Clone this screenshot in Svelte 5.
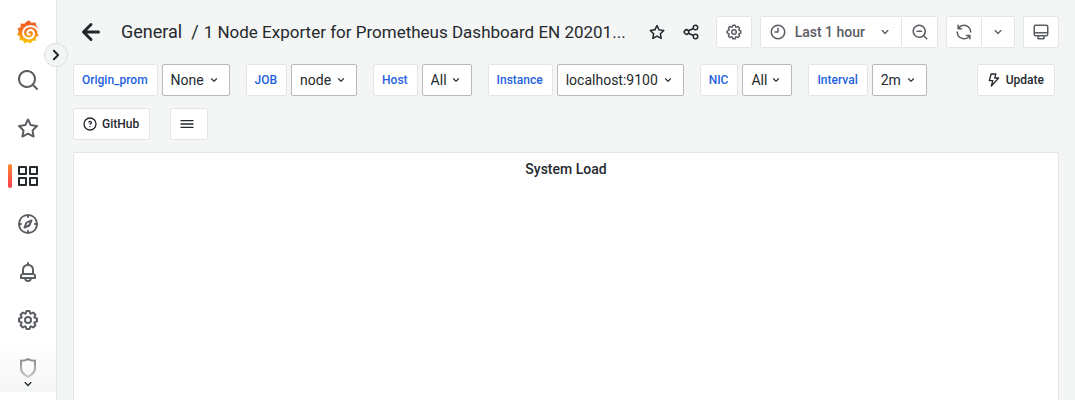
<script>
  const icons = {
    arrowLeft: 'M17,11H9.41l3.3-3.29a1,1,0,1,0-1.42-1.42l-5,5a1,1,0,0,0-.21.33,1,1,0,0,0,0,.76,1,1,0,0,0,.21.33l5,5a1,1,0,0,0,1.42,0,1,1,0,0,0,0-1.42L9.41,13H17a1,1,0,0,0,0-2Z',
    angleDown: 'M17,9.17a1,1,0,0,0-1.41,0L12,12.71,8.46,9.17a1,1,0,0,0-1.41,0,1,1,0,0,0,0,1.42l4.24,4.24a1,1,0,0,0,1.42,0L17,10.59A1,1,0,0,0,17,9.17Z',
    angleRight: 'M14.83,11.29,10.59,7.05a1,1,0,0,0-1.42,0,1,1,0,0,0,0,1.41L12.71,12,9.17,15.54a1,1,0,0,0,0,1.41,1,1,0,0,0,.71.29,1,1,0,0,0,.71-.29l4.24-4.24A1,1,0,0,0,14.83,11.29Z',
    search: 'M21.71,20.29,18,16.61A9,9,0,1,0,16.61,18l3.68,3.68a1,1,0,0,0,1.42,0A1,1,0,0,0,21.71,20.29ZM11,18a7,7,0,1,1,7-7A7,7,0,0,1,11,18Z',
    searchMinus: 'M21.71,20.29,18,16.61A9,9,0,1,0,16.61,18l3.68,3.68a1,1,0,0,0,1.42,0A1,1,0,0,0,21.71,20.29ZM11,18a7,7,0,1,1,7-7A7,7,0,0,1,11,18ZM14,10H8a1,1,0,0,0,0,2h6a1,1,0,0,0,0-2Z',
    star: 'M22,9.67A1,1,0,0,0,21.14,9l-5.69-.83L12.9,3a1,1,0,0,0-1.8,0L8.55,8.16,2.86,9a1,1,0,0,0-.81.68,1,1,0,0,0,.25,1l4.13,4-1,5.68A1,1,0,0,0,6.9,21.44L12,18.77l5.1,2.67a.93.93,0,0,0,.46.12,1,1,0,0,0,.59-.19,1,1,0,0,0,.4-1l-1-5.68,4.13-4A1,1,0,0,0,22,9.67Zm-6.15,4a1,1,0,0,0-.29.88l.72,4.2-3.76-2a1.06,1.06,0,0,0-.94,0l-3.76,2,.72-4.2a1,1,0,0,0-.29-.88l-3-3,4.21-.61a1,1,0,0,0,.76-.55L12,5.7l1.88,3.82a1,1,0,0,0,.76.55l4.21.61Z',
    apps: 'M10,13H3a1,1,0,0,0-1,1v7a1,1,0,0,0,1,1h7a1,1,0,0,0,1-1V14A1,1,0,0,0,10,13ZM9,20H4V15H9ZM21,2H14a1,1,0,0,0-1,1v7a1,1,0,0,0,1,1h7a1,1,0,0,0,1-1V3A1,1,0,0,0,21,2ZM20,9H15V4h5Zm1,4H14a1,1,0,0,0-1,1v7a1,1,0,0,0,1,1h7a1,1,0,0,0,1-1V14A1,1,0,0,0,21,13Zm-1,7H15V15h5ZM10,2H3A1,1,0,0,0,2,3v7a1,1,0,0,0,1,1h7a1,1,0,0,0,1-1V3A1,1,0,0,0,10,2ZM9,9H4V4H9Z',
    compass: 'M12,2A10,10,0,1,0,22,12,10,10,0,0,0,12,2ZM13,19.93V19a1,1,0,0,0-2,0v.93A8,8,0,0,1,4.07,13H5a1,1,0,0,0,0-2H4.07A8,8,0,0,1,11,4.07V5a1,1,0,0,0,2,0V4.07A8,8,0,0,1,19.93,11H19a1,1,0,0,0,0,2h.93A8,8,0,0,1,13,19.93ZM15.14,7.55l-5,2.12a1,1,0,0,0-.52.52l-2.12,5a1,1,0,0,0,.21,1.1,1,1,0,0,0,.7.3.93.93,0,0,0,.4-.09l5-2.12a1,1,0,0,0,.52-.52l2.12-5a1,1,0,0,0-1.31-1.31ZM12.49,12.49,10.28,13.43l.94-2.21,2.21-.94Z',
    bell: 'M18,13.18V10a6,6,0,0,0-5-5.91V3a1,1,0,0,0-2,0V4.09A6,6,0,0,0,6,10v3.18A3,3,0,0,0,4,16v2a1,1,0,0,0,1,1H8.14a4,4,0,0,0,7.72,0H19a1,1,0,0,0,1-1V16A3,3,0,0,0,18,13.18ZM8,10a4,4,0,0,1,8,0v3H8Zm4,10a2,2,0,0,1-1.72-1h3.44A2,2,0,0,1,12,20Zm6-3H6V16a1,1,0,0,1,1-1H17a1,1,0,0,1,1,1Z',
    cog: 'M21.32,9.55l-1.89-.63.89-1.78A1,1,0,0,0,20.13,6L18,3.87a1,1,0,0,0-1.15-.19l-1.78.89-.63-1.89A1,1,0,0,0,13.5,2h-3a1,1,0,0,0-.95.68L8.92,4.57,7.14,3.68A1,1,0,0,0,6,3.87L3.87,6a1,1,0,0,0-.19,1.15l.89,1.78-1.89.63A1,1,0,0,0,2,10.5v3a1,1,0,0,0,.68.95l1.89.63-.89,1.78A1,1,0,0,0,3.87,18L6,20.13a1,1,0,0,0,1.15.19l1.78-.89.63,1.89a1,1,0,0,0,.95.68h3a1,1,0,0,0,.95-.68l.63-1.89,1.78.89A1,1,0,0,0,18,20.13L20.13,18a1,1,0,0,0,.19-1.15l-.89-1.78,1.89-.63A1,1,0,0,0,22,13.5v-3A1,1,0,0,0,21.32,9.55ZM20,12.78l-1.2.4A2,2,0,0,0,17.64,16l.57,1.14-1.1,1.1L16,17.64a2,2,0,0,0-2.79,1.16l-.4,1.2H11.22l-.4-1.2A2,2,0,0,0,8,17.64l-1.14.57-1.1-1.1L6.36,16A2,2,0,0,0,5.2,13.18L4,12.78V11.22l1.2-.4A2,2,0,0,0,6.36,8L5.79,6.89l1.1-1.1L8,6.36A2,2,0,0,0,10.82,5.2l.4-1.2h1.56l.4,1.2A2,2,0,0,0,16,6.36l1.14-.57,1.1,1.1L17.64,8a2,2,0,0,0,1.16,2.79l1.2.4ZM12,8a4,4,0,1,0,4,4A4,4,0,0,0,12,8Zm0,6a2,2,0,1,1,2-2A2,2,0,0,1,12,14Z',
    shield: 'M19.63,3.65a1,1,0,0,0-.84-.2,8,8,0,0,1-6.22-1.27,1,1,0,0,0-1.14,0A8,8,0,0,1,5.21,3.45a1,1,0,0,0-.84.2A1,1,0,0,0,4,4.43v7.45a9,9,0,0,0,3.77,7.33l3.65,2.6a1,1,0,0,0,1.16,0l3.65-2.6A9,9,0,0,0,20,11.88V4.43A1,1,0,0,0,19.63,3.65ZM18,11.88a7,7,0,0,1-2.93,5.7L12,19.77,8.93,17.58A7,7,0,0,1,6,11.88V5.58a10,10,0,0,0,6-1.39,10,10,0,0,0,6,1.39Z',
    share: 'M18,14a4,4,0,0,0-3.08,1.48l-5.1-2.35a3.64,3.64,0,0,0,0-2.26l5.1-2.35A4,4,0,1,0,14,6a4.17,4.17,0,0,0,.07.71L8.79,9.14a4,4,0,1,0,0,5.72l5.28,2.43A4.17,4.17,0,0,0,14,18a4,4,0,1,0,4-4ZM18,4a2,2,0,1,1-2,2A2,2,0,0,1,18,4ZM6,14a2,2,0,1,1,2-2A2,2,0,0,1,6,14Zm12,6a2,2,0,1,1,2-2A2,2,0,0,1,18,20Z',
    clock: 'M12,2A10,10,0,1,0,22,12,10,10,0,0,0,12,2Zm0,18a8,8,0,1,1,8-8A8,8,0,0,1,12,20ZM12,6a1,1,0,0,0-1,1v4H8a1,1,0,0,0,0,2h4a1,1,0,0,0,1-1V7A1,1,0,0,0,12,6Z',
    sync: 'M19.91,15.51H15.38a1,1,0,0,0,0,2h2.4A8,8,0,0,1,4,12a1,1,0,0,0-2,0,10,10,0,0,0,16.88,7.23V21a1,1,0,0,0,2,0V16.5A1,1,0,0,0,19.91,15.51ZM12,2A10,10,0,0,0,5.12,4.77V3a1,1,0,0,0-2,0V7.5a1,1,0,0,0,1,1h4.5a1,1,0,0,0,0-2H6.22A8,8,0,0,1,20,12a1,1,0,0,0,2,0A10,10,0,0,0,12,2Z',
    monitor: 'M19,2H5A3,3,0,0,0,2,5V15a3,3,0,0,0,3,3H7.64l-.58,1a2,2,0,0,0,0,2,2,2,0,0,0,1.75,1h6.46A2,2,0,0,0,17,21a2,2,0,0,0,0-2l-.59-1H19a3,3,0,0,0,3-3V5A3,3,0,0,0,19,2ZM8.77,20,10,18H14l1.2,2ZM20,15a1,1,0,0,1-1,1H5a1,1,0,0,1-1-1V14H20Zm0-3H4V5A1,1,0,0,1,5,4H19a1,1,0,0,1,1,1Z',
    bolt: 'M19.87,8.6A1,1,0,0,0,19,8H14.42l1.27-4.74a1,1,0,0,0-.17-.87A1,1,0,0,0,14.72,2h-7a1,1,0,0,0-1,.74l-2.68,10a1,1,0,0,0,.17.87,1,1,0,0,0,.8.39H8.89L7.08,20.74a1,1,0,0,0,1.71.93L19.7,9.6A1,1,0,0,0,19.87,8.6ZM10,17.36l1.16-4.1a1,1,0,0,0-.17-.87,1,1,0,0,0-.8-.39H6.35L8.49,4h4.92L12.15,8.74a1,1,0,0,0,1,1.26h3.57Z',
    question: 'M11.29,15.29a1.58,1.58,0,0,0-.12.15.76.76,0,0,0-.09.18.64.64,0,0,0-.06.18,1.36,1.36,0,0,0,0,.2.84.84,0,0,0,.08.38.9.9,0,0,0,.54.54.94.94,0,0,0,.76,0,.9.9,0,0,0,.54-.54A1,1,0,0,0,13,16a1,1,0,0,0-.29-.71A1,1,0,0,0,11.29,15.29ZM12,2A10,10,0,1,0,22,12,10,10,0,0,0,12,2Zm0,18a8,8,0,1,1,8-8A8,8,0,0,1,12,20ZM12,7A3,3,0,0,0,9.4,8.5a1,1,0,1,0,1.73,1A1,1,0,0,1,12,9a1,1,0,0,1,0,2,1,1,0,1,0,0,2,3,3,0,0,0,0-6Z',
    bars: 'M3,8H21a1,1,0,0,0,0-2H3A1,1,0,0,0,3,8Zm18,8H3a1,1,0,0,0,0,2H21a1,1,0,0,0,0-2Zm0-5H3a1,1,0,0,0,0,2H21a1,1,0,0,0,0-2Z'
  };

  const nav = [
    { icon: 'search', label: 'Search' },
    { icon: 'star', label: 'Starred' },
    { icon: 'apps', label: 'Dashboards', active: true },
    { icon: 'compass', label: 'Explore' },
    { icon: 'bell', label: 'Alerting' },
    { icon: 'cog', label: 'Configuration' },
    { icon: 'shield', label: 'Server admin' }
  ];

  const variables = [
    { name: 'Origin_prom', value: 'None' },
    { name: 'JOB', value: 'node' },
    { name: 'Host', value: 'All' },
    { name: 'Instance', value: 'localhost:9100' },
    { name: 'NIC', value: 'All' },
    { name: 'Interval', value: '2m' }
  ];
</script>

{#snippet icon(name, size)}
  <svg width={size} height={size} viewBox="0 0 24 24" fill="currentColor" aria-hidden="true">
    <path d={icons[name]} />
  </svg>
{/snippet}

<div class="app">
  <nav class="sidebar" aria-label="Main">
    <a class="item" href="#home" aria-label="Home">
      <svg width="24" height="24" viewBox="0 0 24 24" aria-hidden="true">
        <defs>
          <linearGradient id="flame" x1="0" y1="0" x2="0" y2="1">
            <stop offset="0" stop-color="#f05a28" />
            <stop offset="0.4" stop-color="#f5701f" />
            <stop offset="1" stop-color="#fbca0a" />
          </linearGradient>
        </defs>
        <path fill="url(#flame)" d="M12.8 .2 15.4 2.7Q17 2.3 19.5 2.6L20.3 5.4Q23 8.3 23.2 11.6L21 12.6 22.8 15.6 19.9 17.6 19.7 20.8 16.5 20.8 14.6 23.4 11.7 21.9 8.2 23.4 7 20.6 3.6 20.2 4 16.8 1.1 14.6 2.8 11.8 1.5 8.5 4.5 7.3 4.8 3.6 8.4 3.8Q9.6 2.1 12.8 .2Z" />
        <path fill="none" stroke="#fff" stroke-width="2" stroke-linecap="round" d="M22.5 11.5C20.8 7.5 17.4 5.8 13.6 6.2C9.3 6.7 7 9.7 7.1 13C7.2 16.4 9.9 18.5 12.9 18.4C16 18.3 18 16.2 17.9 13.7C17.8 11.4 16.2 10.1 14.3 10.1C12.4 10.2 11.4 11.5 11.5 12.8C11.6 14 12.5 14.7 13.7 14.5" />
      </svg>
    </a>
    {#each nav as entry}
      <a class="item" class:active={entry.active} href="#{entry.icon}" aria-label={entry.label} aria-current={entry.active ? 'page' : undefined}>
        {@render icon(entry.icon, 24)}
      </a>
    {/each}
    <div class="more">{@render icon('angleDown', 16)}</div>
    <button class="expand" aria-label="Expand sidebar">{@render icon('angleRight', 24)}</button>
  </nav>

  <main>
    <header>
      <button class="plain back" aria-label="Go back">{@render icon('arrowLeft', 36)}</button>
      <h1><a href="#general">General</a><span class="slash">/</span><a class="name" href="#dashboard">1 Node Exporter for Prometheus Dashboard EN 20201...</a></h1>
      <div class="marks">
        <button class="plain" aria-label="Mark as favorite">{@render icon('star', 18)}</button>
        <button class="plain" aria-label="Share dashboard">{@render icon('share', 18)}</button>
      </div>
      <div class="tools">
        <button class="box square" aria-label="Dashboard settings">{@render icon('cog', 18)}</button>
        <div class="group">
          <button class="box time">{@render icon('clock', 18)}<span>Last 1 hour</span>{@render icon('angleDown', 16)}</button>
          <button class="box square" aria-label="Zoom out time range">{@render icon('searchMinus', 18)}</button>
        </div>
        <div class="group">
          <button class="box square" aria-label="Refresh dashboard">{@render icon('sync', 18)}</button>
          <button class="box narrow" aria-label="Auto refresh interval">{@render icon('angleDown', 16)}</button>
        </div>
        <button class="box square" aria-label="Cycle view mode">{@render icon('monitor', 18)}</button>
      </div>
    </header>

    <div class="submenu">
      {#each variables as variable}
        <div class="variable">
          <label for="var-{variable.name}">{variable.name}</label>
          <div class="picker">
            <select id="var-{variable.name}">
              <option>{variable.value}</option>
            </select>
            {@render icon('angleDown', 14)}
          </div>
        </div>
      {/each}
      <a class="box link update" href="#update">{@render icon('bolt', 16)}<span>Update</span></a>
      <a class="box link" href="#github">{@render icon('question', 16)}<span>GitHub</span></a>
      <button class="box menu" aria-label="Dashboard links">{@render icon('bars', 16)}</button>
    </div>

    <section class="panel">
      <h2>System Load</h2>
    </section>
  </main>
</div>

<style>
  :global(body) {
    margin: 0;
    background: #f4f5f5;
  }

  .app {
    display: flex;
    height: 100vh;
    overflow: hidden;
    font-family: Roboto, 'Liberation Sans', sans-serif;
    font-size: 14px;
    line-height: 22px;
    color: #24292e;
  }

  svg {
    display: block;
    flex: none;
  }

  a {
    color: inherit;
    text-decoration: none;
  }

  button,
  select {
    font: inherit;
    color: inherit;
    margin: 0;
    cursor: pointer;
  }

  .sidebar {
    position: relative;
    z-index: 1;
    flex: none;
    display: flex;
    flex-direction: column;
    box-sizing: border-box;
    width: 57px;
    padding-top: 8px;
    background: #fff;
    border-right: 1px solid #e4e5e6;
  }

  .item {
    position: relative;
    flex: none;
    display: flex;
    align-items: center;
    justify-content: center;
    height: 48px;
    color: #5a5d62;
  }

  .item.active {
    color: #24292e;
  }

  .item.active::before {
    content: '';
    position: absolute;
    left: 8px;
    top: 12px;
    bottom: 12px;
    width: 4px;
    border-radius: 2px;
    background: linear-gradient(#ff8833, #f53e4c);
  }

  .more {
    position: absolute;
    left: 0;
    right: 0;
    bottom: 8px;
    display: flex;
    align-items: flex-end;
    justify-content: center;
    height: 48px;
    background: linear-gradient(transparent, #f4f5f5);
  }

  .expand {
    position: absolute;
    top: 43px;
    right: -12px;
    display: flex;
    align-items: center;
    justify-content: center;
    width: 24px;
    height: 24px;
    padding: 0;
    border: 1px solid #dcddde;
    border-radius: 50%;
    background: #f4f5f5;
  }

  main {
    flex: 1;
    min-width: 0;
    display: flex;
    flex-direction: column;
    padding: 16px 16px 0;
  }

  header {
    display: flex;
    align-items: center;
    height: 32px;
  }

  .plain {
    display: flex;
    padding: 0;
    border: 0;
    background: none;
  }

  .back {
    margin-right: 12px;
  }

  h1 {
    flex: 1;
    min-width: 0;
    margin: 0;
    font-size: 18px;
    font-weight: 400;
    overflow: hidden;
    white-space: nowrap;
    text-overflow: ellipsis;
  }

  .slash {
    margin: 0 5px 0 9px;
  }

  .name {
    font-size: 17px;
  }

  .marks {
    display: flex;
    gap: 16px;
    padding: 0 16px;
  }

  .tools {
    display: flex;
    gap: 8px;
    color: #5a5d62;
  }

  .group {
    display: flex;
  }

  .group .box + .box {
    border-left: 0;
  }

  .box {
    display: flex;
    align-items: center;
    justify-content: center;
    box-sizing: border-box;
    height: 32px;
    padding: 0 8px;
    border: 1px solid #e4e5e6;
    border-radius: 2px;
    background: #fff;
    font-weight: 500;
  }

  .square {
    width: 36px;
  }

  .narrow {
    width: 33px;
  }

  .time span {
    margin: 0 12px 0 8px;
  }

  .submenu {
    display: flex;
    flex-wrap: wrap;
    gap: 12px 16px;
    padding: 16px 4px 12px 0;
  }

  .variable {
    display: flex;
    gap: 4px;
  }

  label {
    box-sizing: border-box;
    height: 32px;
    padding: 0 9px 0 8px;
    border: 1px solid #e4e5e6;
    border-radius: 2px;
    background: #fff;
    color: #1f62e0;
    font-size: 12px;
    font-weight: 500;
    line-height: 30px;
  }

  .picker {
    display: grid;
    align-items: center;
  }

  .picker select,
  .picker :global(svg) {
    grid-area: 1 / 1;
  }

  .picker :global(svg) {
    justify-self: end;
    margin-right: 9px;
    pointer-events: none;
  }

  select {
    appearance: none;
    box-sizing: border-box;
    height: 32px;
    padding: 0 24px 0 8px;
    border: 1px solid #b9babb;
    border-radius: 2px;
    background: #fff;
  }

  .link {
    gap: 4px;
    padding-right: 10px;
    font-size: 12px;
  }

  .update {
    margin-left: auto;
  }

  .menu {
    width: 38px;
    margin-left: 4px;
    padding: 0 12px 0 8px;
  }

  .panel {
    flex: 1;
    border: 1px solid #e4e5e6;
    border-bottom: 0;
    border-radius: 2px 2px 0 0;
    background: #fff;
  }

  h2 {
    margin: 0;
    padding: 5px 8px;
    font-size: 14px;
    font-weight: 500;
    text-align: center;
  }
</style>
